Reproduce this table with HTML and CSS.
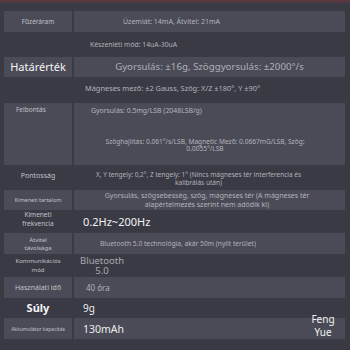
FILE: index.html
```html
<!DOCTYPE html>
<html lang="hu">
<head>
<meta charset="utf-8">
<title>Specifikáció</title>
<link rel="stylesheet" href="styles.css">
</head>
<body>
<div class="topbar"></div>
<div class="spec">
  <div class="row alt r-current">
    <div class="cell label">Fűzéráram</div>
    <div class="cell value">Üzemiát: 14mA, Átvitel: 21mA</div>
  </div>
  <div class="row r-standby">
    <div class="cell label"></div>
    <div class="cell value">Készenléti mód: 14uA-30uA</div>
  </div>
  <div class="row alt r-range">
    <div class="cell label">Határérték</div>
    <div class="cell value">Gyorsulás: ±16g, Szöggyorsulás: ±2000°/s</div>
  </div>
  <div class="row r-magnet">
    <div class="cell label"></div>
    <div class="cell value">Mágneses mező: ±2 Gauss, Szög: X/Z ±180°, Y ±90°</div>
  </div>
  <div class="row alt r-resolution">
    <div class="cell label">Felbontás</div>
    <div class="cell value">
      <p class="first">Gyorsulás: 0.5mg/LSB (2048LSB/g)</p>
      <p class="second">Szöghajlítás: 0.061°/s/LSB, Magnetic Mező: 0.0667mG/LSB, Szög:<br>0.0055°/LSB</p>
    </div>
  </div>
  <div class="row r-accuracy">
    <div class="cell label">Pontosság</div>
    <div class="cell value">X, Y tengely: 0,2°, Z tengely: 1° (Nincs mágneses tér interferencia és<br>kalibrálás után)</div>
  </div>
  <div class="row alt r-output">
    <div class="cell label">Kimeneti tartalom</div>
    <div class="cell value">Gyorsulás, szögsebesség, szög, mágneses tér (A mágneses tér<br>alapértelmezés szerint nem adódik ki)</div>
  </div>
  <div class="row r-freq">
    <div class="cell label">Kimeneti<br>frekvencia</div>
    <div class="cell value">0.2Hz~200Hz</div>
  </div>
  <div class="row alt r-distance">
    <div class="cell label">Átvitel<br>távolsága</div>
    <div class="cell value">Bluetooth 5.0 technológia, akár 50m (nyílt terület)</div>
  </div>
  <div class="row r-comm">
    <div class="cell label">Kommunikációs<br>mód</div>
    <div class="cell value"><span class="bt">Bluetooth<br>5.0</span></div>
  </div>
  <div class="row alt r-time">
    <div class="cell label">Használati idő</div>
    <div class="cell value">40 óra</div>
  </div>
  <div class="row r-weight">
    <div class="cell label">Súly</div>
    <div class="cell value">9g</div>
  </div>
  <div class="row alt r-battery">
    <div class="cell label">Akkumulátor kapacitás</div>
    <div class="cell value">130mAh</div>
  </div>
  <div class="watermark">Feng<br>Yue</div>
</div>
</body>
</html>
```
FILE: styles.css
```css
html, body {
  margin: 0;
  padding: 0;
}
body {
  width: 350px;
  height: 350px;
  overflow: hidden;
  background: #393a44;
  font-family: "Noto Sans", "Liberation Sans", sans-serif;
  color: #b2b3bb;
}
.topbar {
  height: 3px;
  background: linear-gradient(#603640, #4a3841);
}
.spec {
  position: relative;
  margin: 8px 5px 0 4px;
  display: flex;
  flex-direction: column;
}
.row {
  display: grid;
  grid-template-columns: 68px 1fr;
  column-gap: 2px;
}
.row.alt .cell {
  background: #4a4b56;
}
.cell {
  display: flex;
  align-items: center;
  min-width: 0;
  box-sizing: border-box;
}
.label {
  justify-content: center;
  text-align: center;
  font-size: 6.5px;
  line-height: 8px;
  color: #c0c1c9;
}
.value {
  font-size: 7px;
  line-height: 8px;
  white-space: nowrap;
}
p {
  margin: 0;
}

/* Fűzéráram */
.r-current { height: 21px; }
.r-current .value { padding-left: 49px; font-size: 7px; }

/* Készenléti mód */
.r-standby { height: 25px; }
.r-standby .value { padding-left: 16px; font-size: 6.8px; }

/* Határérték */
.r-range { height: 20px; }
.r-range .label { font-size: 11px; line-height: 12px; color: #f4f4f6; }
.r-range .value { justify-content: center; font-size: 9.7px; line-height: 12px; color: #aeafb7; }

/* Mágneses mező */
.r-magnet { height: 26px; }
.r-magnet .value { align-items: flex-start; padding: 7px 0 0 11px; font-size: 7.4px; }

/* Felbontás */
.r-resolution { height: 62px; }
.r-resolution .label { align-items: flex-start; justify-content: flex-start; padding: 3px 0 0 12px; }
.r-resolution .value {
  flex-direction: column;
  align-items: stretch;
  font-size: 6.6px;
  line-height: 7.6px;
}
.r-resolution .first { padding: 4px 0 0 17px; font-size: 6.9px; }
.r-resolution .second { margin-top: 23px; text-align: center; padding-right: 9px; }

/* Pontosság */
.r-accuracy { height: 25px; }
.r-accuracy .label { font-size: 7px; padding-bottom: 3px; }
.r-accuracy .value { justify-content: center; text-align: center; padding: 2px 22px 0 0; font-size: 6.5px; }

/* Kimeneti tartalom */
.r-output { height: 20px; }
.r-output .label { font-size: 5.5px; padding-bottom: 1px; }
.r-output .value { justify-content: center; text-align: center; padding: 0 5px 1px 0; font-size: 7px; line-height: 9px; }

/* Kimeneti frekvencia */
.r-freq { height: 23px; }
.r-freq .label { line-height: 8.3px; padding-bottom: 4px; }
.r-freq .value { padding-left: 9px; font-size: 11px; line-height: 12px; color: #f2f2f4; }

/* Átvitel távolsága */
.r-distance { height: 21px; }
.r-distance .label { font-size: 6px; }
.r-distance .value { padding-left: 26px; font-size: 6.7px; }

/* Kommunikációs mód */
.r-comm { height: 23px; }
.r-comm .label { font-size: 6px; line-height: 8.3px; }
.r-comm .value { padding-left: 6px; }
.r-comm .bt {
  display: block;
  text-align: center;
  font-size: 9.5px;
  line-height: 10px;
  color: #a8a9b1;
}

/* Használati idő */
.r-time { height: 21px; }
.r-time .label { font-size: 7px; }
.r-time .value { padding-left: 12px; font-size: 8px; }

/* Súly */
.r-weight { height: 20px; }
.r-weight .label { font-size: 11px; line-height: 12px; font-weight: 700; color: #f6f6f8; }
.r-weight .value { padding-left: 9px; font-size: 10px; line-height: 12px; color: #ececef; }

/* Akkumulátor kapacitás */
.r-battery { height: 21px; }
.r-battery .label { font-size: 5px; line-height: 6px; }
.r-battery .value { padding-left: 9px; font-size: 10.5px; line-height: 12px; color: #ececef; }

/* Watermark overlay */
.watermark {
  position: absolute;
  left: 304px;
  top: 302px;
  width: 30px;
  text-align: center;
  font-size: 10px;
  line-height: 12.5px;
  color: #f2f2f4;
}
```
